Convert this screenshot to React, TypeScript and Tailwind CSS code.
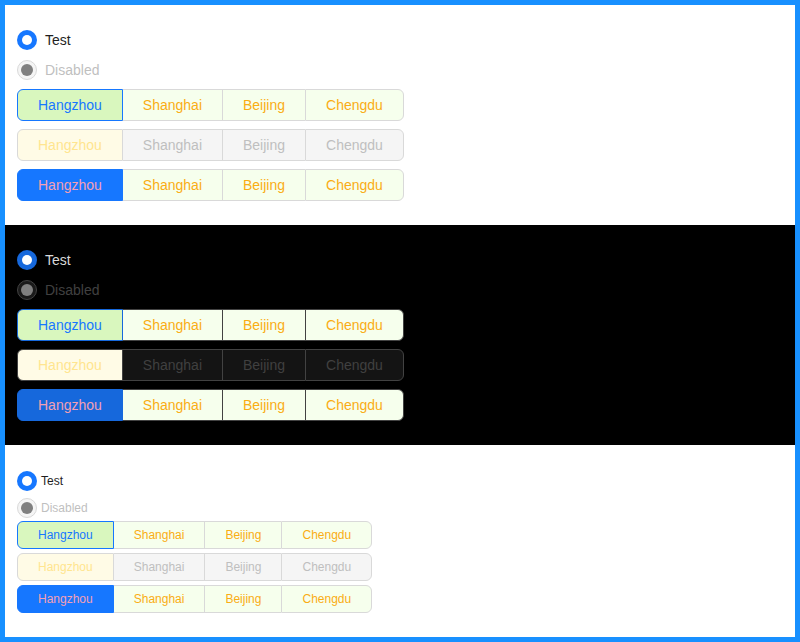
import React from "react";

type Theme = {
  dark: boolean;
  small: boolean;
};

const cities = ["Hangzhou", "Shanghai", "Beijing", "Chengdu"];

function Radio({ checked, disabled, label, t }: { checked?: boolean; disabled?: boolean; label: string; t: Theme }) {
  const rowH = t.small ? "h-[27px]" : "h-[30px]";
  const gap = t.small ? "gap-1" : "gap-2";
  const textSize = t.small ? "text-[12px]" : "text-[14px]";
  let circle: React.ReactNode;
  if (checked) {
    circle = (
      <span className={`w-5 h-5 rounded-full flex items-center justify-center ${t.dark ? "bg-[#1668dc]" : "bg-[#1677ff]"}`}>
        <span className="w-2.5 h-2.5 rounded-full bg-white" />
      </span>
    );
  } else {
    circle = (
      <span
        className={`w-5 h-5 rounded-full flex items-center justify-center border ${
          t.dark ? "border-[#424242] bg-[#1a1a1a]" : "border-[#d9d9d9] bg-[#f5f5f5]"
        }`}
      >
        <span className="w-3 h-3 rounded-full bg-[#808080]" />
      </span>
    );
  }
  const color = disabled
    ? t.dark
      ? "text-[#404040]"
      : "text-[#bfbfbf]"
    : t.dark
    ? "text-[#d9d9d9]"
    : "text-[#1f1f1f]";
  return (
    <div className={`flex items-center ${rowH} ${gap}`}>
      {circle}
      <span className={`${textSize} ${color}`}>{label}</span>
    </div>
  );
}

function Group({ variant, t }: { variant: "normal" | "disabled" | "solid"; t: Theme }) {
  const h = t.small ? "h-[28px] text-[12px]" : "h-[32px] text-[14px]";
  const grayBorder = t.dark ? "border-[#424242]" : "border-[#d9d9d9]";
  return (
    <div className="flex self-start">
      {cities.map((c, i) => {
        const last = i === cities.length - 1;
        let cls = `flex items-center justify-center px-5 ${h} `;
        if (i === 0) {
          cls += "border rounded-l-md ";
          if (variant === "normal") {
            cls += `bg-[#d9f7be] text-[#1677ff] ${t.dark ? "border-[#1668dc]" : "border-[#1677ff]"}`;
          } else if (variant === "disabled") {
            cls += `bg-[#fffbe6] text-[#ffe58f] ${grayBorder}`;
          } else {
            cls += t.dark
              ? "bg-[#1668dc] text-[#f2a0b3] border-[#1668dc]"
              : "bg-[#1677ff] text-[#f4a0b4] border-[#1677ff]";
          }
        } else {
          cls += `border-y ${grayBorder} `;
          if (i > 1) cls += "border-l ";
          if (last) cls += "border-r rounded-r-md ";
          if (variant === "disabled") {
            cls += t.dark ? "bg-[#141414] text-[#404040]" : "bg-[#f5f5f5] text-[#bfbfbf]";
          } else {
            cls += "bg-[#f6ffed] text-[#faad14]";
          }
        }
        return (
          <div key={c} className={cls}>
            {c}
          </div>
        );
      })}
    </div>
  );
}

function Section({ t }: { t: Theme }) {
  const bg = t.dark ? "bg-black" : "bg-white";
  const pad = t.small ? "pt-[22px] pb-6 h-[192px]" : "pt-5 pb-6 h-[220px]";
  return (
    <div className={`${bg} ${pad} px-3 flex flex-col`}>
      <Radio checked label="Test" t={t} />
      <Radio disabled label="Disabled" t={t} />
      <div className={`flex flex-col ${t.small ? "gap-1" : "gap-2 mt-1"}`}>
        <Group variant="normal" t={t} />
        <Group variant="disabled" t={t} />
        <Group variant="solid" t={t} />
      </div>
    </div>
  );
}

export default function App() {
  return (
    <div
      className="w-[800px] h-[642px] border-[5px] border-[#1890ff] flex flex-col overflow-hidden"
      style={{ fontFamily: '"Liberation Sans", Arial, sans-serif' }}
    >
      <Section t={{ dark: false, small: false }} />
      <Section t={{ dark: true, small: false }} />
      <Section t={{ dark: false, small: true }} />
    </div>
  );
}
